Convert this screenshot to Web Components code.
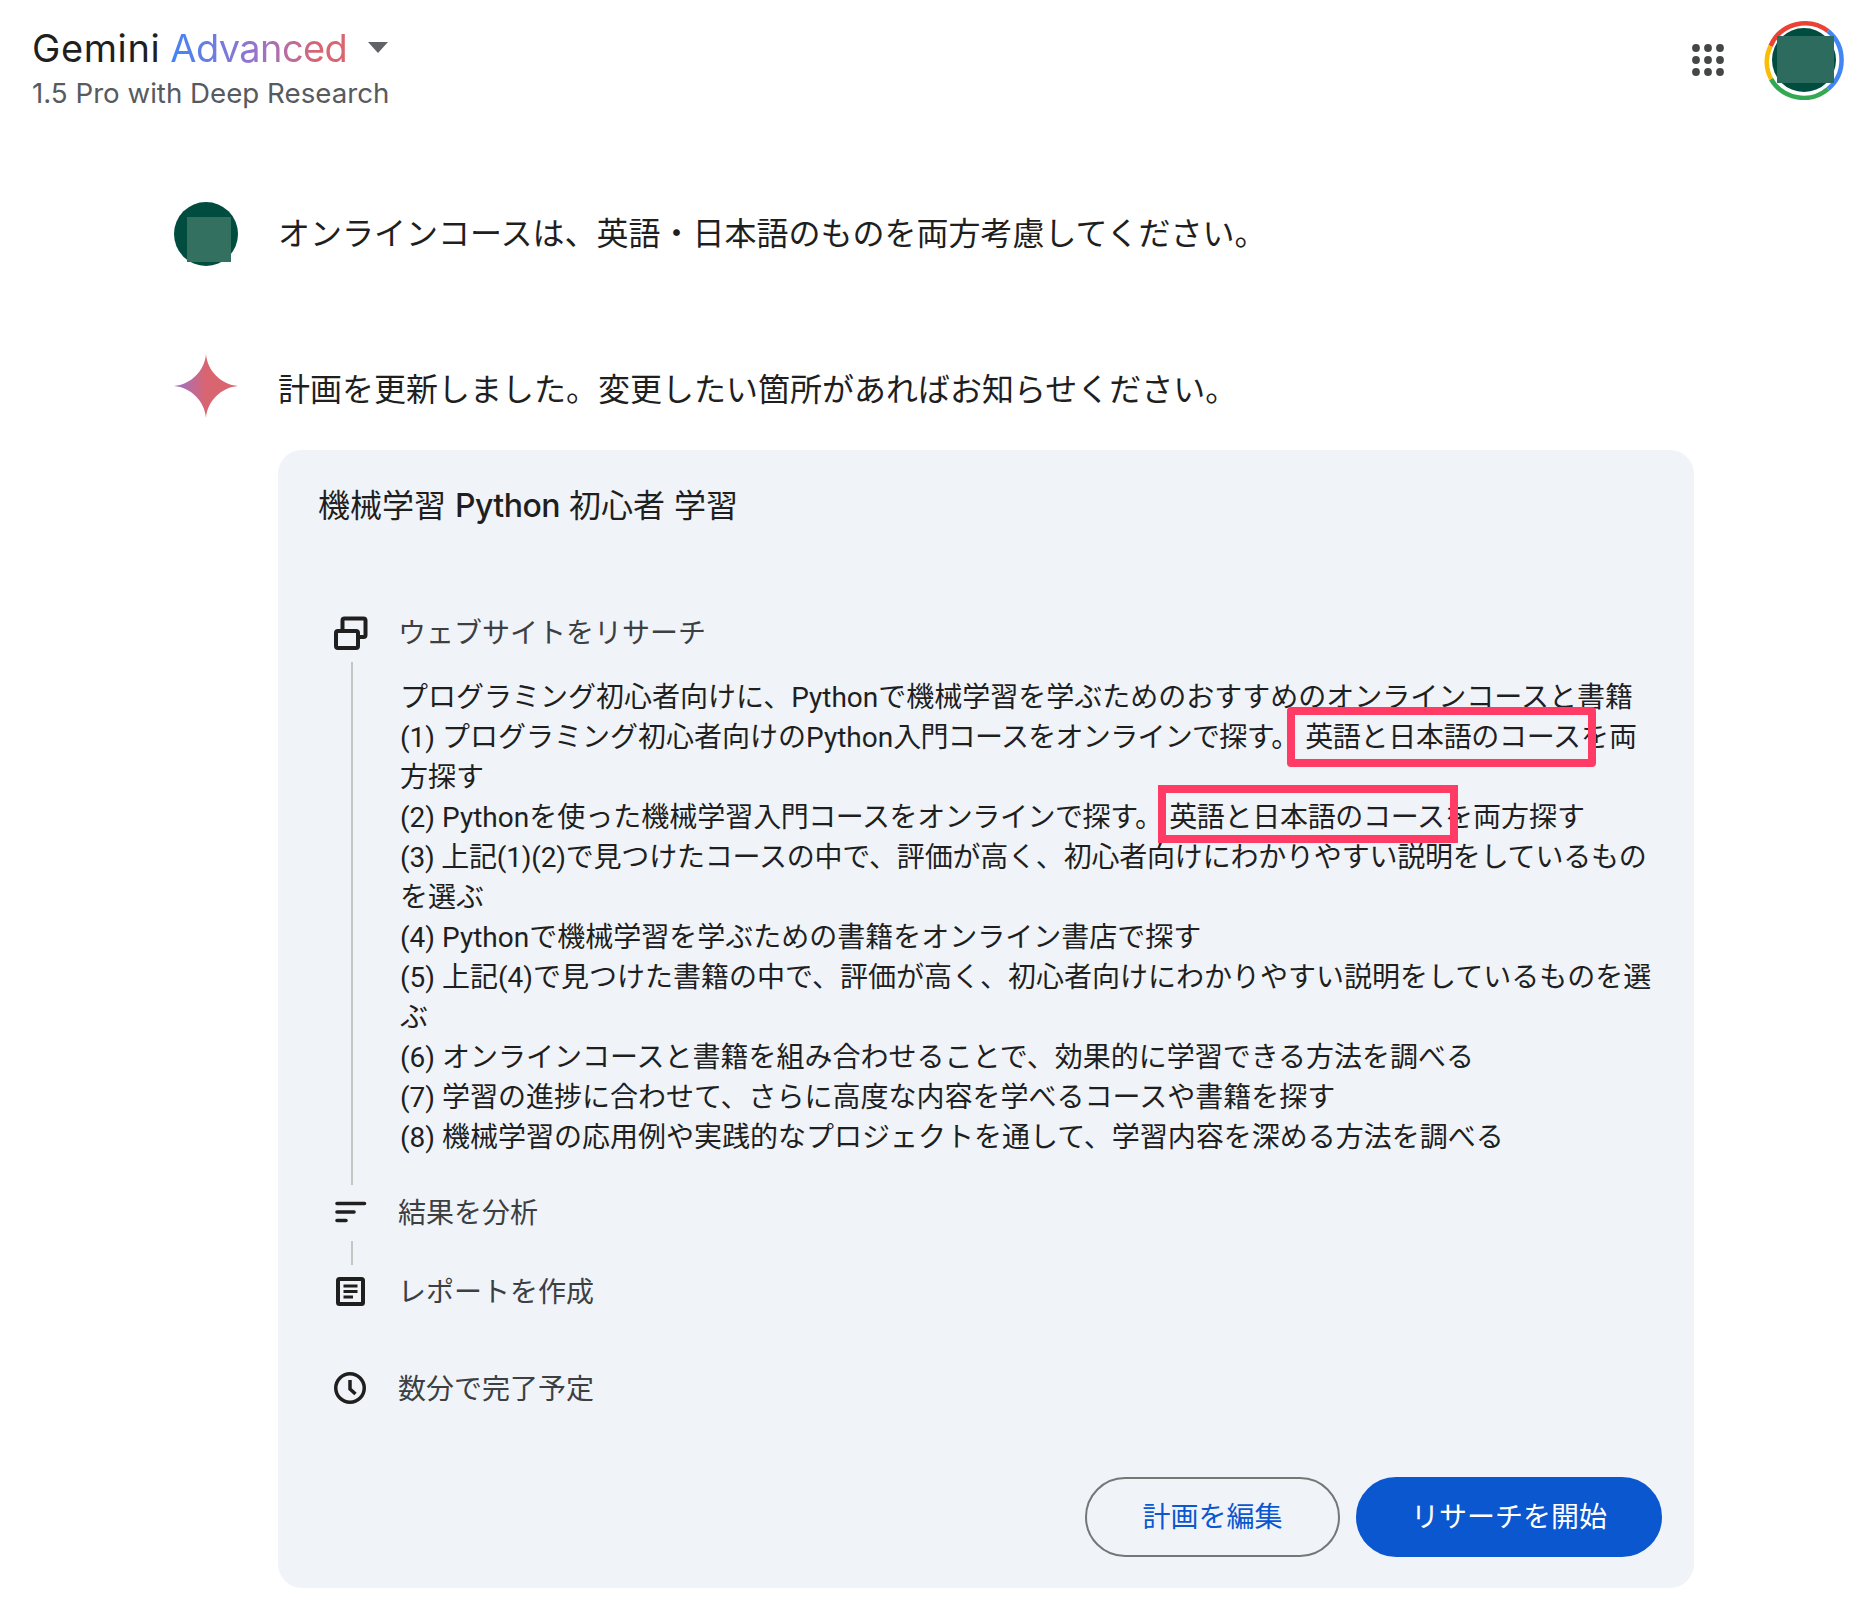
<!DOCTYPE html>
<html lang="ja">
<head>
<meta charset="utf-8">
<title>Gemini Advanced</title>
<style>
    html,body{margin:0;background:#fff;}
    body{font-family:"Inter","Noto Sans CJK JP",sans-serif;color:#1f1f1f;}
</style>
</head>
<body>
<gem-header></gem-header>
<gem-main>
    <chat-turn kind="user">オンラインコースは、英語・日本語のものを両方考慮してください。</chat-turn>
    <chat-turn kind="model">計画を更新しました。変更したい箇所があればお知らせください。</chat-turn>
    <plan-card>
        <span slot="heading">機械学習 <span style="font-weight:500;letter-spacing:-.55px">Python</span> 初心者 学習</span>
        <plan-step icon="web" label="ウェブサイトをリサーチ" connected style="--pad-top:24px;--pad-bottom:36px;--rail-top:10px;--rail-bottom:7px">
            プログラミング初心者向けに、Pythonで機械学習を学ぶためのおすすめのオンラインコースと書籍<br>
            (1) プログラミング初心者向けのPython<span style="letter-spacing:-.7px">入門コースをオンラインで探す。</span><mark-box style="--l:-11px;--r:-9px;--t:-14px;--b:-13px;--rad:4px">英語と日本語のコース</mark-box>を両<br>
            方探す<br>
            (2) Pythonを使った機械学習<span style="letter-spacing:-.43px">入門コースをオンラインで探す。</span><mark-box style="--l:-5px;--r:-7px;--t:-16px;--b:-9px">英語と日本語のコース</mark-box>を両方探す<br>
            <span style="letter-spacing:-.2px">(3) 上記(1)(2)で見つけたコースの中で、評価が高く、初心者向けにわかりやすい説明をしているもの</span><br>
            を選ぶ<br>
            (4) Pythonで機械学習を学ぶための書籍をオンライン書店で探す<br>
            (5) 上記(4)で見つけた書籍の中で、評価が高く、初心者向けにわかりやすい説明をしているものを選<br>
            ぶ<br>
            (6) オンラインコースと書籍を組み合わせることで、効果的に学習できる方法を調べる<br>
            (7) 学習の進捗に合わせて、さらに高度な内容を学べるコースや書籍を探す<br>
            (8) 機械学習の応用例や実践的なプロジェクトを通して、学習内容を深める方法を調べる
        </plan-step>
        <plan-step icon="filter" label="結果を分析" connected style="--pad-top:39px;--rail-top:9px;--rail-bottom:6px"></plan-step>
        <plan-step icon="doc" label="レポートを作成" style="--pad-top:57px"></plan-step>
        <plan-step icon="clock" label="数分で完了予定"></plan-step>
        <plan-button slot="actions" style="--w:255px">計画を編集</plan-button>
        <plan-button slot="actions" primary style="--w:306px">リサーチを開始</plan-button>
    </plan-card>
</gem-main>

<script>
class GemHeader extends HTMLElement{
    constructor(){
        super()
        this.attachShadow({mode: "open"})
        this.shadowRoot.innerHTML = `
            <style>
                :host{display:flex;justify-content:space-between;height:120px;}
                .brand{padding:24px 0 0 32px;}
                .title{display:flex;align-items:center;font-size:38px;line-height:48px;color:#1f1f1f;}
                .gem{letter-spacing:.6px;}
                .adv{margin-left:10px;letter-spacing:-.6px;background:linear-gradient(90deg,#4285f4 0%,#9b72cb 50%,#d96570 85%);-webkit-background-clip:text;background-clip:text;color:transparent;}
                .caret{margin-left:21px;margin-top:-2px;width:0;height:0;border-left:10.5px solid transparent;border-right:10.5px solid transparent;border-top:11px solid #5f6368;}
                .sub{margin-top:3px;font-size:27.7px;line-height:36px;color:#575b5f;}
                .right{display:flex;align-items:center;gap:38px;padding-right:10px;}
                svg{display:block;}
            </style>
            <div class="brand">
                <div class="title"><span class="gem">Gemini</span><span class="adv">Advanced</span><span class="caret"></span></div>
                <div class="sub">1.5 Pro with Deep Research</div>
            </div>
            <div class="right">
                <svg width="36" height="36" viewBox="0 0 36 36" fill="#444746">
                    <circle cx="6" cy="6" r="3.9"/><circle cx="18" cy="6" r="3.9"/><circle cx="30" cy="6" r="3.9"/>
                    <circle cx="6" cy="18" r="3.9"/><circle cx="18" cy="18" r="3.9"/><circle cx="30" cy="18" r="3.9"/>
                    <circle cx="6" cy="30" r="3.9"/><circle cx="18" cy="30" r="3.9"/><circle cx="30" cy="30" r="3.9"/>
                </svg>
                <svg width="80" height="80" viewBox="0 0 80 80" fill="none">
                    <g stroke-width="4.500">
                        <path d="M6.500 26 A37.750 37.750 0 0 1 64 11" stroke="#ea4335"/>
                        <path d="M64 11 A37.750 37.750 0 0 1 64 69" stroke="#4285f4"/>
                        <path d="M64 69 A37.750 37.750 0 0 1 7 59" stroke="#34a853"/>
                        <path d="M7 59 A37.750 37.750 0 0 1 6.500 26" stroke="#fbbc04"/>
                    </g>
                    <circle cx="40" cy="40" r="32" fill="#004d40"/>
                    <rect x="13" y="16" width="57" height="47" fill="#2c6b5e"/>
                </svg>
            </div>
        `
    }
}
customElements.define('gem-header', GemHeader)

class GemMain extends HTMLElement{
    constructor(){
        super()
        this.attachShadow({mode: "open"})
        this.shadowRoot.innerHTML = `
            <style>
                :host{display:block;padding:82px 160px 0 174px;}
            </style>
            <slot></slot>
        `
    }
}
customElements.define('gem-main', GemMain)

class ChatTurn extends HTMLElement{
    constructor(){
        super()
        this.attachShadow({mode: "open"})
        this.shadowRoot.innerHTML = `
            <style>
                :host{display:grid;grid-template-columns:64px 1fr;column-gap:40px;align-items:center;margin-bottom:88px;}
                :host([kind="model"]){margin-bottom:32px;}
                .text{font-size:32px;line-height:44px;color:#1f1f1f;margin-top:0;}
                :host([kind="model"]) .text{margin-top:8px;}
                svg{display:block;overflow:visible;}
            </style>
            <span class="avatar"></span>
            <div class="text"><slot></slot></div>
        `
    }
    connectedCallback(){
        const avatar = this.shadowRoot.querySelector('.avatar')
        if(this.getAttribute('kind') === 'user'){
            avatar.innerHTML = `<svg width="64" height="64" viewBox="0 0 64 64"><circle cx="32" cy="32" r="32" fill="#004d40"/><rect x="13" y="15" width="44" height="45" fill="#33705f"/></svg>`
        }else{
            avatar.innerHTML = `<svg width="64" height="64" viewBox="0 0 64 64"><defs><linearGradient id="star" x1="0" x2="1" y1="0" y2="0"><stop offset="0" stop-color="#9b72cb"/><stop offset=".5" stop-color="#d96570"/><stop offset="1" stop-color="#d96570"/></linearGradient></defs><path fill="url(#star)" d="M32 0C33.500 17 47 30.500 64 32C47 33.500 33.500 47 32 64C30.500 47 17 33.500 0 32C17 30.500 30.500 17 32 0Z"/></svg>`
        }
    }
}
customElements.define('chat-turn', ChatTurn)

class PlanCard extends HTMLElement{
    constructor(){
        super()
        this.attachShadow({mode: "open"})
        this.shadowRoot.innerHTML = `
            <style>
                :host{display:block;margin-left:104px;background:#f0f4f9;border-radius:24px;padding:34px 32px 31px 40px;}
                .heading{font-size:32px;line-height:44px;color:#1f1f1f;margin-bottom:84px;}
                .steps{padding-left:16px;}
                .actions{display:flex;justify-content:flex-end;gap:16px;margin-top:69px;}
            </style>
            <div class="heading"><slot name="heading"></slot></div>
            <div class="steps"><slot></slot></div>
            <div class="actions"><slot name="actions"></slot></div>
        `
    }
}
customElements.define('plan-card', PlanCard)

const STEP_ICONS = {
    web: `<g transform="translate(0 2)" stroke-width="4"><rect x="2" y="13" width="22" height="17" rx="2"/><path d="M8.500 11V2.500a2 2 0 0 1 2-2H29.500a2 2 0 0 1 2 2V17a2 2 0 0 1-2 2H26"/></g>`,
    filter: `<path d="M3 7.500H30.500M3 16H20M3 24.500H12" stroke-linecap="round" stroke-width="3.600"/>`,
    doc: `<g transform="translate(0 1)"><rect x="4" y="3" width="25" height="25" rx="1.500" stroke-width="4"/><path d="M9.500 10H23.500M9.500 15.500H23.500M9.500 21H19" stroke-width="2.800"/></g>`,
    clock: `<circle cx="16" cy="16" r="14.250"/><path d="M16 8V17L21.500 22"/>`
}

class PlanStep extends HTMLElement{
    constructor(){
        super()
        this.attachShadow({mode: "open"})
        this.shadowRoot.innerHTML = `
            <style>
                :host{display:grid;grid-template-columns:32px 1fr;column-gap:32px;font-size:28px;color:#1f1f1f;}
                .icon{height:40px;display:flex;align-items:center;}
                svg{display:block;fill:none;stroke:#1f1f1f;stroke-width:3.500;overflow:visible;}
                .label{line-height:40px;color:#3c4043;padding-top:1px;margin-bottom:-1px;}
                .rail{margin:var(--rail-top,0) 0 var(--rail-bottom,0) 17px;width:2px;background:#c4c7c5;visibility:hidden;}
                :host([connected]) .rail{visibility:visible;}
                .body{padding:var(--pad-top,0) 0 var(--pad-bottom,0) 2px;white-space:nowrap;color:#1f1f1f;font:28px/40px "Roboto","Noto Sans CJK JP",sans-serif;position:relative;top:2px;}
            </style>
            <div class="icon"></div>
            <div class="label"></div>
            <div class="rail"></div>
            <div class="body"><slot></slot></div>
        `
    }
    connectedCallback(){
        this.shadowRoot.querySelector('.icon').innerHTML = `<svg width="32" height="32" viewBox="0 0 32 32">${STEP_ICONS[this.getAttribute('icon')]}</svg>`
        this.shadowRoot.querySelector('.label').textContent = this.getAttribute('label')
    }
}
customElements.define('plan-step', PlanStep)

class MarkBox extends HTMLElement{
    constructor(){
        super()
        this.attachShadow({mode: "open"})
        this.shadowRoot.innerHTML = `
            <style>
                :host{display:inline;position:relative;letter-spacing:-.3px;margin-right:-6.5px;}
                .box{position:absolute;left:var(--l);right:var(--r);top:var(--t);bottom:var(--b);border:8px solid #ff3b66;border-radius:var(--rad,0);pointer-events:none;}
            </style>
            <slot></slot><span class="box"></span>
        `
    }
}
customElements.define('mark-box', MarkBox)

class PlanButton extends HTMLElement{
    constructor(){
        super()
        this.attachShadow({mode: "open"})
        this.shadowRoot.innerHTML = `
            <style>
                :host{display:flex;align-items:center;justify-content:center;box-sizing:border-box;width:var(--w);height:80px;border-radius:40px;border:2px solid #747775;color:#0b57d0;font-size:28px;padding-bottom:4px;}
                :host([primary]){background:#0b57d0;border-color:#0b57d0;color:#fff;}
            </style>
            <slot></slot>
        `
    }
}
customElements.define('plan-button', PlanButton)
</script>
</body>
</html>
